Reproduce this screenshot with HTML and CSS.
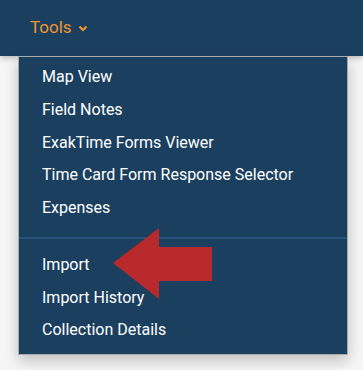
FILE: index.html
```html
<!DOCTYPE html>
<html>
<head>
<meta charset="utf-8">
<link rel="stylesheet" href="styles.css">
</head>
<body>
<header class="topbar">
  <span class="tools">Tools<svg class="chev" width="10" height="7" viewBox="0 0 10 7"><path d="M1.5 1.5 L5 5 L8.5 1.5" fill="none" stroke="#f0962c" stroke-width="2.2"/></svg></span>
</header>
<div class="menu">
  <ul class="group">
    <li>Map View</li>
    <li>Field Notes</li>
    <li>ExakTime Forms Viewer</li>
    <li>Time Card Form Response Selector</li>
    <li>Expenses</li>
  </ul>
  <div class="divider"></div>
  <ul class="group">
    <li>Import</li>
    <li>Import History</li>
    <li>Collection Details</li>
  </ul>
</div>
<svg class="arrow" width="100" height="72" viewBox="0 0 100 72"><polygon points="0,35 46,0 46,19 99,19 99,53 46,53 46,71" fill="#b7292b"/></svg>
</body>
</html>
```
FILE: styles.css
```css
html, body { margin: 0; padding: 0; }
body {
  background: #f6f6f6;
  font-family: Roboto, "Liberation Sans", sans-serif;
  width: 363px;
  height: 370px;
  overflow: hidden;
  position: relative;
}
.topbar {
  height: 56px;
  background: #1b3f5f;
  display: flex;
  align-items: center;
  padding-left: 30px;
  box-shadow: 0 2px 6px rgba(0,0,0,0.25);
}
.tools {
  color: #f0962c;
  font-size: 17px;
  display: flex;
  align-items: center;
  margin-top: -2px;
}
.chev { margin-left: 6px; margin-top: 2px; }
.menu {
  margin-left: 18px;
  width: 328px;
  background: #1b3f5f;
  border: 1px solid #a9a9a9;
  padding: 4px 0 7px;
  box-shadow: 0 6px 14px rgba(0,0,0,0.22);
}
.group { list-style: none; margin: 0; padding: 0; }
.group li {
  color: #ffffff;
  font-size: 16px;
  height: 32.75px;
  line-height: 32.75px;
  padding-left: 23px;
  white-space: nowrap;
}
.divider {
  height: 2px;
  background: #24527a;
  margin: 12px 0 10px;
}
.arrow {
  position: absolute;
  left: 113px;
  top: 228px;
}
```
